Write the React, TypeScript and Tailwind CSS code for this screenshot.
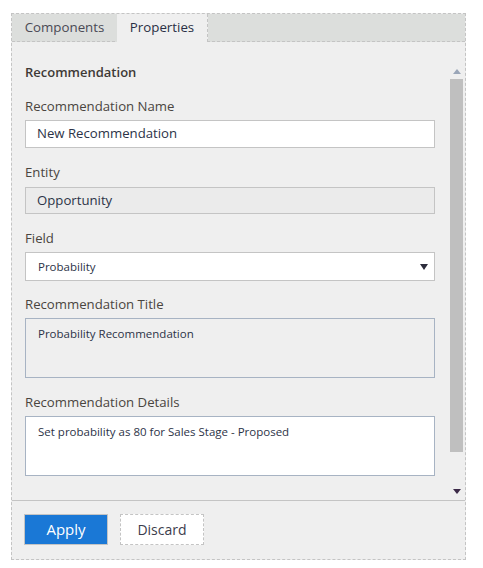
import React from 'react'

const font = { fontFamily: '"Segoe UI", "Open Sans", "Noto Sans", sans-serif' }

const Label = ({ children }: { children: React.ReactNode }) => (
  <p className="text-[13.2px] leading-[20px] text-[#4a4540]">{children}</p>
)

export default function App() {
  return (
    <div className="w-[483px] h-[568px] bg-white pt-[13px] pl-[11px]" style={font}>
      <div className="w-[455px] h-[547px] border border-dashed border-[#c4c4c4] bg-[#efefef] flex flex-col">
        {/* tabs */}
        <div className="h-[28px] flex bg-[#dcdedc] border-b border-dashed border-[#c4c4c4]">
          <div className="w-[105px] flex items-center justify-center text-[13.3px] text-[#4a4a55]">Components</div>
          <div className="w-[91px] flex items-center justify-center text-[13.3px] text-[#2a2f45] bg-[#efefef] border-r border-dashed border-[#c4c4c4] -mb-px">
            Properties
          </div>
        </div>

        <div className="flex flex-1">
          {/* form */}
          <div className="flex-1 pl-[13px] pr-[15px] pt-[20px]">
            <p className="text-[13px] leading-[20px] font-semibold text-[#3e3a36]">Recommendation</p>

            <div className="mt-[14px]">
              <Label>Recommendation Name</Label>
              <div className="mt-[4px] h-[28px] bg-white border border-[#c4c4c4] flex items-center pl-[11px] text-[13.2px] text-[#2c3347]">
                New Recommendation
              </div>
            </div>

            <div className="mt-[14px]">
              <Label>Entity</Label>
              <div className="mt-[5px] h-[27px] bg-[#ebebeb] border border-[#c4c4c4] flex items-center pl-[11px] text-[13.2px] text-[#2c3347]">
                Opportunity
              </div>
            </div>

            <div className="mt-[14px]">
              <Label>Field</Label>
              <div className="mt-[4px] h-[29px] bg-white border border-[#c4c4c4] flex items-center pl-[12px] pr-[6px] text-[11.5px] text-[#2c3347]">
                <span className="flex-1">Probability</span>
                <svg width="8" height="6" viewBox="0 0 8 6"><path d="M0 0h8L4 6z" fill="#2c2c3c" /></svg>
              </div>
            </div>

            <div className="mt-[13px]">
              <Label>Recommendation Title</Label>
              <div className="mt-[4px] h-[60px] border border-[#a7b3c3] pl-[12px] pt-[6px] text-[11.5px] leading-[18px] text-[#2c3347]">
                Probability Recommendation
              </div>
            </div>

            <div className="mt-[14px]">
              <Label>Recommendation Details</Label>
              <div className="mt-[4px] h-[60px] bg-white border border-[#a7b3c3] pl-[12px] pt-[6px] text-[11.5px] leading-[18px] text-[#2c3347]">
                Set probability as 80 for Sales Stage - Proposed
              </div>
            </div>
          </div>

          {/* scrollbar */}
          <div className="w-[13px] mr-[2px] mt-[22px] mb-[2px] flex flex-col items-center">
            <div className="h-[15px] w-full flex items-center justify-center">
              <svg width="8" height="5" viewBox="0 0 8 5"><path d="M0 5h8L4 0z" fill="#9aa6b8" /></svg>
            </div>
            <div className="w-full h-[373px] bg-[#bfbfbf]" />
            <div className="flex-1" />
            <div className="h-[14px] w-full flex items-center justify-center">
              <svg width="8" height="5" viewBox="0 0 8 5"><path d="M0 0h8L4 5z" fill="#3c2a48" /></svg>
            </div>
          </div>
        </div>

        {/* footer */}
        <div className="h-[59px] border-t border-[#c4c4c4] flex items-center gap-[12px] pl-[12px] pb-[1px]">
          <button className="w-[84px] h-[31px] bg-[#1a78d6] border border-[#c4c4c4] text-white text-[15px]">Apply</button>
          <button className="w-[84px] h-[31px] bg-white border border-dashed border-[#c4c4c4] text-[#3c3c4c] text-[14px]">Discard</button>
        </div>
      </div>
    </div>
  )
}
